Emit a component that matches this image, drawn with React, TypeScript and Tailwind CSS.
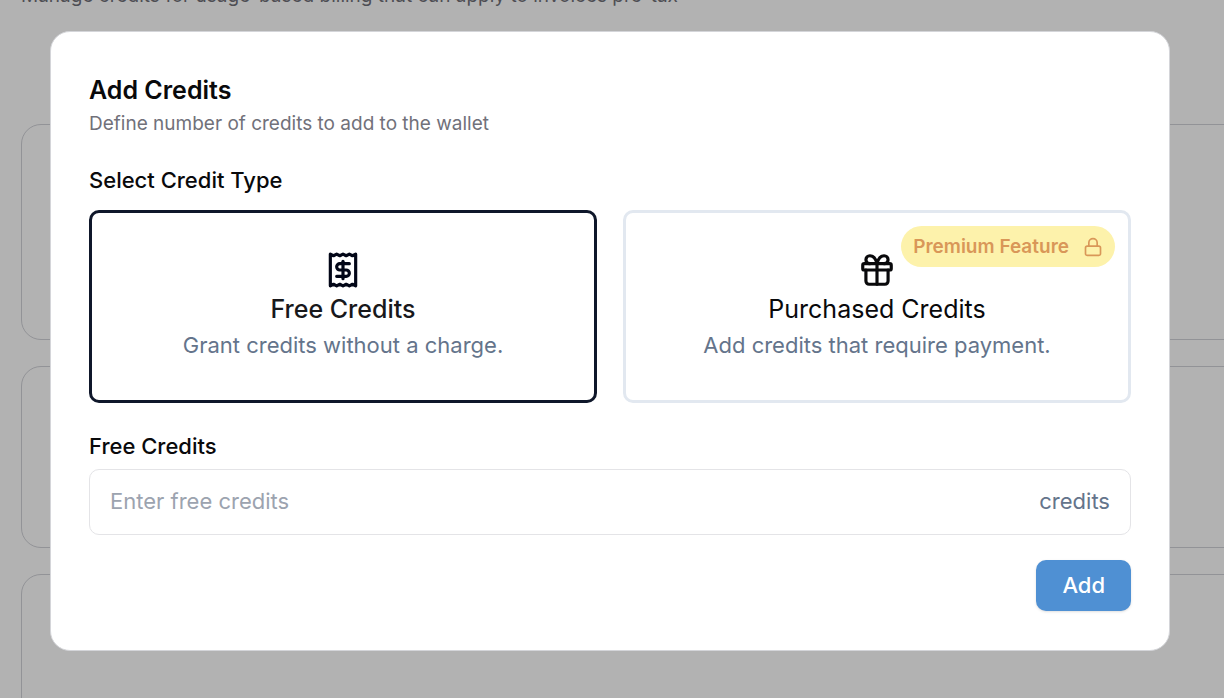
import React, { useState } from "react";
import { Gift, Lock, Receipt } from "lucide-react";

type CreditType = "free" | "purchased";

interface TypeCardProps {
  value: CreditType;
  selected: boolean;
  onSelect: (value: CreditType) => void;
  icon: React.ReactNode;
  title: string;
  description: string;
  badge?: string;
}

function TypeCard({ value, selected, onSelect, icon, title, description, badge }: TypeCardProps) {
  return (
    <button
      type="button"
      aria-pressed={selected}
      onClick={() => onSelect(value)}
      className={`relative flex flex-1 flex-col items-center rounded-[10px] border-[3px] px-6 pt-[38px] pb-[37px] ${
        selected ? "border-[#0f172a] text-[#020617]" : "border-[#e2e8f0] text-[#09090b]"
      }`}
    >
      {icon}
      <span className={`mt-0.5 text-[25px] leading-9 ${selected ? "font-medium text-[#18181b]" : "font-normal"}`}>
        {title}
      </span>
      <span className="text-[22px] leading-9 text-[#64748b]">{description}</span>
      {badge && (
        <span className="absolute top-[13px] right-[13px] flex items-center gap-3.5 rounded-full bg-[#fdf2ab] px-3 text-[19px] leading-[41px] font-semibold text-[#d99758]">
          {badge}
          <Lock size={20} strokeWidth={2} aria-hidden="true" />
        </span>
      )}
    </button>
  );
}

export default function App() {
  const [type, setType] = useState<CreditType>("free");

  return (
    <div className="relative h-screen overflow-hidden bg-[#b2b2b2] font-['Inter',sans-serif]">
      <div className="-mt-[18px] flex flex-col pl-[21px]">
        <p className="text-[19px] leading-7 text-[#4e4e54]">
          Manage credits for usage-based billing that can apply to invoices pre-tax
        </p>
        <div className="mt-[114px] -mr-8 flex flex-col gap-[26px]">
          <div className="h-54 rounded-[20px] border border-[#929397]" />
          <div className="h-[182px] rounded-[20px] border border-[#929397]" />
          <div className="h-54 rounded-[20px] border border-[#929397]" />
        </div>
      </div>

      <div className="absolute inset-0 flex items-start justify-center pt-[31px] pr-1">
        <div
          role="dialog"
          aria-labelledby="dialog-title"
          aria-describedby="dialog-description"
          className="mx-[50px] w-full max-w-[1120px] rounded-[20px] border border-[#d4d5d9] bg-white px-[38px] pt-[38px] pb-[39px] text-[#09090b]"
        >
          <h1 id="dialog-title" className="text-[25px] leading-10 font-semibold">
            Add Credits
          </h1>
          <p id="dialog-description" className="text-[19px] leading-7 text-[#71717a]">
            Define number of credits to add to the wallet
          </p>

          <h2 className="mt-6 text-[22px] leading-9 font-medium">Select Credit Type</h2>
          <div className="mt-3 flex gap-[26px]">
            <TypeCard
              value="free"
              selected={type === "free"}
              onSelect={setType}
              icon={<Receipt size={38} aria-hidden="true" />}
              title="Free Credits"
              description="Grant credits without a charge."
            />
            <TypeCard
              value="purchased"
              selected={type === "purchased"}
              onSelect={setType}
              icon={<Gift size={38} aria-hidden="true" />}
              title="Purchased Credits"
              description="Add credits that require payment."
              badge="Premium Feature"
            />
          </div>

          <label htmlFor="credits" className="mt-[26px] block text-[22px] leading-[34px] font-medium">
            Free Credits
          </label>
          <div className="mt-1.5 flex h-[66px] items-center rounded-[10px] border border-[#e4e4e7] px-5 pb-0.5 text-[22px]">
            <input
              id="credits"
              type="text"
              inputMode="numeric"
              placeholder="Enter free credits"
              className="min-w-0 flex-1 bg-transparent outline-none placeholder:text-[#9ca3af]"
            />
            <span className="text-[#64748b]">credits</span>
          </div>

          <div className="mt-[25px] flex justify-end">
            <button
              type="button"
              className="h-[51px] rounded-[10px] bg-[#4f90d3] px-[26px] text-[22px] font-medium text-white shadow-sm"
            >
              Add
            </button>
          </div>
        </div>
      </div>
    </div>
  );
}
